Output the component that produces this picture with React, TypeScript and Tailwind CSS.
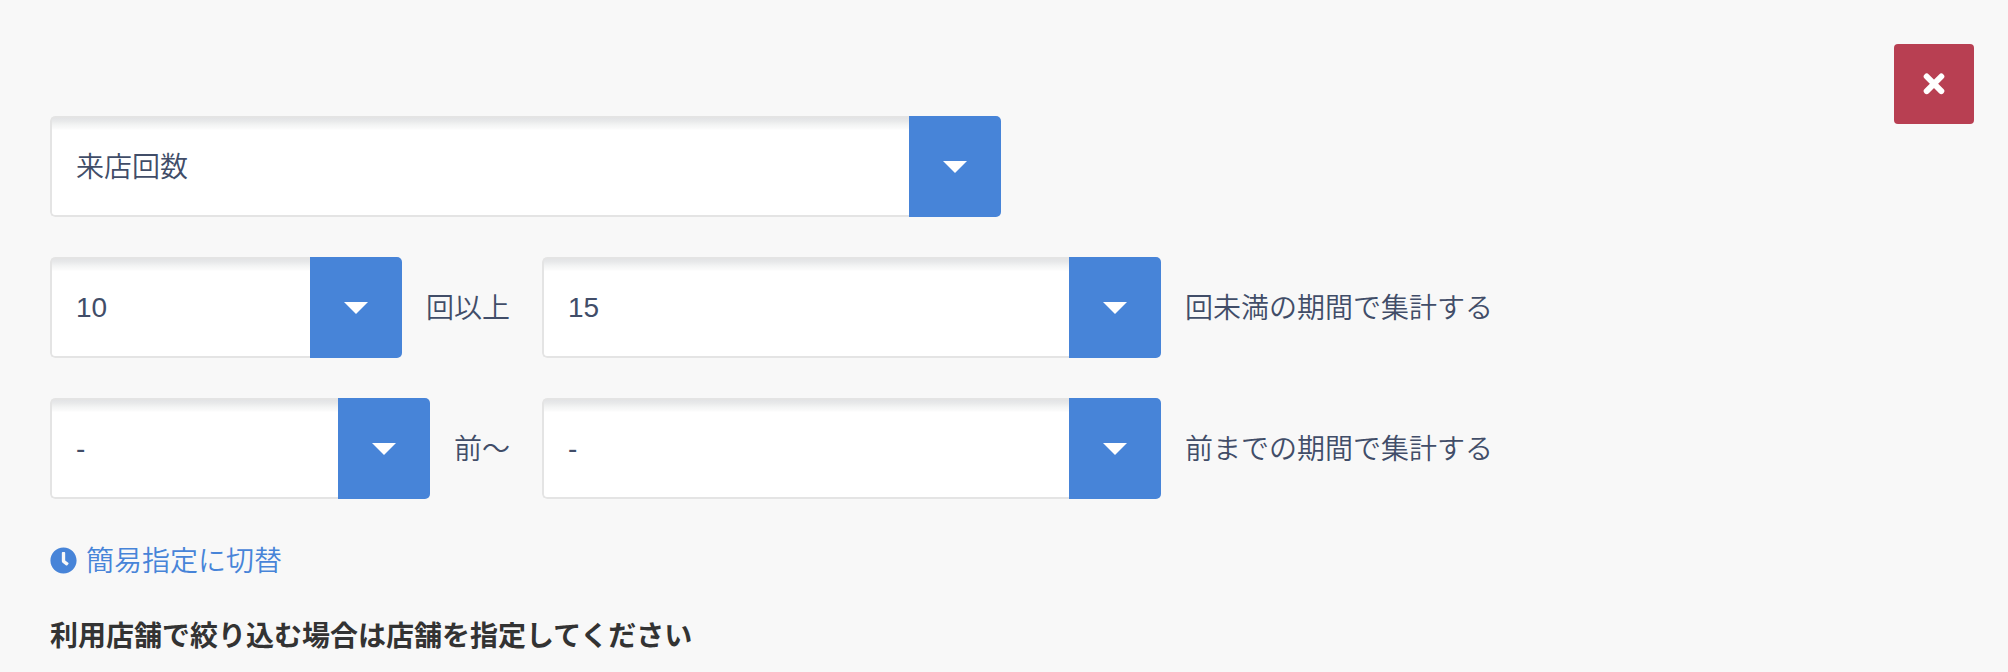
import { FaClock } from "react-icons/fa";

type SelectFieldProps = { value: string; width: string; offset?: string };

function SelectField({ value, width, offset = "" }: SelectFieldProps) {
  return (
    <button type="button" className={`flex h-[101px] shrink-0 overflow-hidden rounded-[5px] text-left ${width}`}>
      <span className="flex h-full flex-1 items-center rounded-l-[5px] border-2 border-r-0 border-[#e4e4e4] bg-white bg-[linear-gradient(to_bottom,#e3e4e6_0px,#e8e9ea_3px,#f3f4f4_7px,#fbfbfb_11px,#ffffff_12px)] pl-6">
        <span className={offset}>{value}</span>
      </span>
      <span className="flex h-full w-[92px] items-center justify-center bg-[#4784d8]">
        <svg className="h-3 w-6 fill-white" viewBox="0 0 24 12">
          <path d="M0 0h24L12 12z" />
        </svg>
      </span>
    </button>
  );
}

export default function App() {
  return (
    <main className="flex h-[672px] w-full items-start justify-between overflow-hidden bg-[#f8f8f8] pl-[50px] pr-[34px] font-['Liberation_Sans','Noto_Sans_CJK_JP',sans-serif] text-[28px] leading-10 font-[350] whitespace-nowrap text-[#414d68]" lang="ja">
      <div className="flex flex-col gap-10 pt-[116px]">
        <SelectField value="来店回数" width="w-[951px]" offset="pt-0.5" />
        <div className="flex items-center">
          <SelectField value="10" width="w-[352px]" offset="pt-px" />
          <span className="w-[140px] pt-[3px] pl-6">回以上</span>
          <SelectField value="15" width="w-[619px]" offset="pt-px" />
          <span className="pt-[3px] pl-6">回未満の期間で集計する</span>
        </div>
        <div className="flex items-center">
          <SelectField value="-" width="w-[380px]" />
          <span className="w-[112px] pt-[3px] pl-6">前〜</span>
          <SelectField value="-" width="w-[619px]" />
          <span className="pt-[3px] pl-6">前までの期間で集計する</span>
        </div>
        <a className="flex items-center gap-[9px] text-[#4784d8]">
          <FaClock className="size-[27px]" />
          <span className="pt-[3px]">簡易指定に切替</span>
        </a>
        <p className="-mt-[5px] font-bold text-[#333333]">利用店舗で絞り込む場合は店舗を指定してください</p>
      </div>
      <button type="button" aria-label="閉じる" className="mt-11 flex size-20 items-center justify-center rounded-[4px] bg-[#b83f52]">
        <svg className="size-[22px] stroke-white" viewBox="0 0 22 22" fill="none" strokeWidth="6" strokeLinecap="round">
          <path d="M3.7 3.5l14.6 14.6M18.3 3.5L3.7 18.1" />
        </svg>
      </button>
    </main>
  );
}
